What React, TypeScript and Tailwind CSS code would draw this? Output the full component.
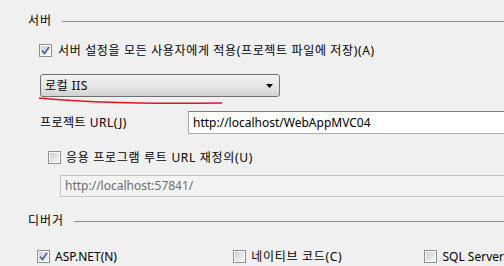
const font = "font-['Segoe_UI','Noto_Sans','Noto_Sans_CJK_KR',sans-serif]";

function CheckBox({ checked }: { checked?: boolean }) {
    return (
        <div className="w-[13px] h-[13px] border border-[#8e8f8f] bg-white p-px shrink-0">
            <div className="w-full h-full bg-gradient-to-br from-[#cbcfd5] to-[#f7f7f7] flex items-center justify-center">
                {checked && (
                    <svg width="9" height="9" viewBox="0 0 9 9">
                        <path d="M1 4.5 L3.5 7.5 L8 1" fill="none" stroke="#4a5d94" strokeWidth="1.6" />
                    </svg>
                )}
            </div>
        </div>
    );
}

function GroupHeader({ title, className }: { title: string; className?: string }) {
    return (
        <div className={`flex items-center h-[15px] pl-[28px] ${className ?? ''}`}>
            <span className="text-[12px] leading-[15px] tracking-[1px] text-black whitespace-nowrap">{title}</span>
            <div className="flex-1 h-px bg-[#8c8c8c] ml-[10px] mt-px" />
        </div>
    );
}

export default function App() {
    return (
        <div className={`relative w-[504px] h-[266px] bg-[#f0f0f0] overflow-hidden text-black ${font}`}>
            <div className="flex flex-col pt-[13px]">
                <GroupHeader title="서버" />

                <div className="flex items-center h-[15px] mt-[15px] pl-[39px]">
                    <CheckBox checked />
                    <span className="text-[12px] ml-[6px] tracking-[0.65px] whitespace-nowrap">서버 설정을 모든 사용자에게 적용(프로젝트 파일에 저장)(A)</span>
                </div>

                <div className="ml-[40px] mt-[16px] w-[240px] h-[23px] rounded-[3px] border border-[#707070] bg-gradient-to-b from-[#f3f3f3] via-[#e6e6e6] to-[#d3d3d3] flex items-center pl-[4px] pr-[6px]">
                    <span className="text-[12px] tracking-[0.5px] flex-1">로컬 IIS</span>
                    <svg width="7" height="4" viewBox="0 0 7 4">
                        <path d="M0 0 H7 L3.5 4 Z" fill="#000" />
                    </svg>
                </div>

                <div className="flex items-center h-[23px] mt-[14px]">
                    <span className="text-[12px] w-[188px] pl-[40px] tracking-[0.5px] whitespace-nowrap">프로젝트 URL(J)</span>
                    <div className="flex-1 h-[23px] -mr-[10px] border border-[#abadb3] border-t-[#7a7a7a] bg-white flex items-center pl-[4px]">
                        <span className="text-[12px] whitespace-nowrap">http://localhost/WebAppMVC04</span>
                    </div>
                </div>

                <div className="flex items-center h-[15px] mt-[16px] pl-[48px]">
                    <CheckBox />
                    <span className="text-[12px] ml-[5px] tracking-[0.7px] whitespace-nowrap">응용 프로그램 루트 URL 재정의(U)</span>
                </div>

                <div className="ml-[60px] -mr-[10px] mt-[10px] h-[22px] border border-[#c2c2c2] bg-[#f3f3f3] flex items-center pl-[4px]">
                    <span className="text-[12px] text-[#6d6d6d] whitespace-nowrap">http://localhost:57841/</span>
                </div>

                <GroupHeader title="디버거" className="mt-[16px]" />

                <div className="flex items-center h-[15px] mt-[21px]">
                    <div className="flex items-center w-[235px] pl-[37px]">
                        <CheckBox checked />
                        <span className="text-[12px] ml-[5px] whitespace-nowrap">ASP.NET(N)</span>
                    </div>
                    <div className="flex items-center w-[193px]">
                        <CheckBox />
                        <span className="text-[12px] ml-[5px] tracking-[0.7px] whitespace-nowrap">네이티브 코드(C)</span>
                    </div>
                    <div className="flex items-center">
                        <CheckBox />
                        <span className="text-[12px] ml-[5px] whitespace-nowrap">SQL Server</span>
                    </div>
                </div>
            </div>

            <svg className="absolute top-0 left-0 pointer-events-none" width="504" height="266">
                <path d="M39 98 C 80 102, 150 104, 222 103" fill="none" stroke="#e8141c" strokeWidth="1.6" />
            </svg>
        </div>
    );
}
